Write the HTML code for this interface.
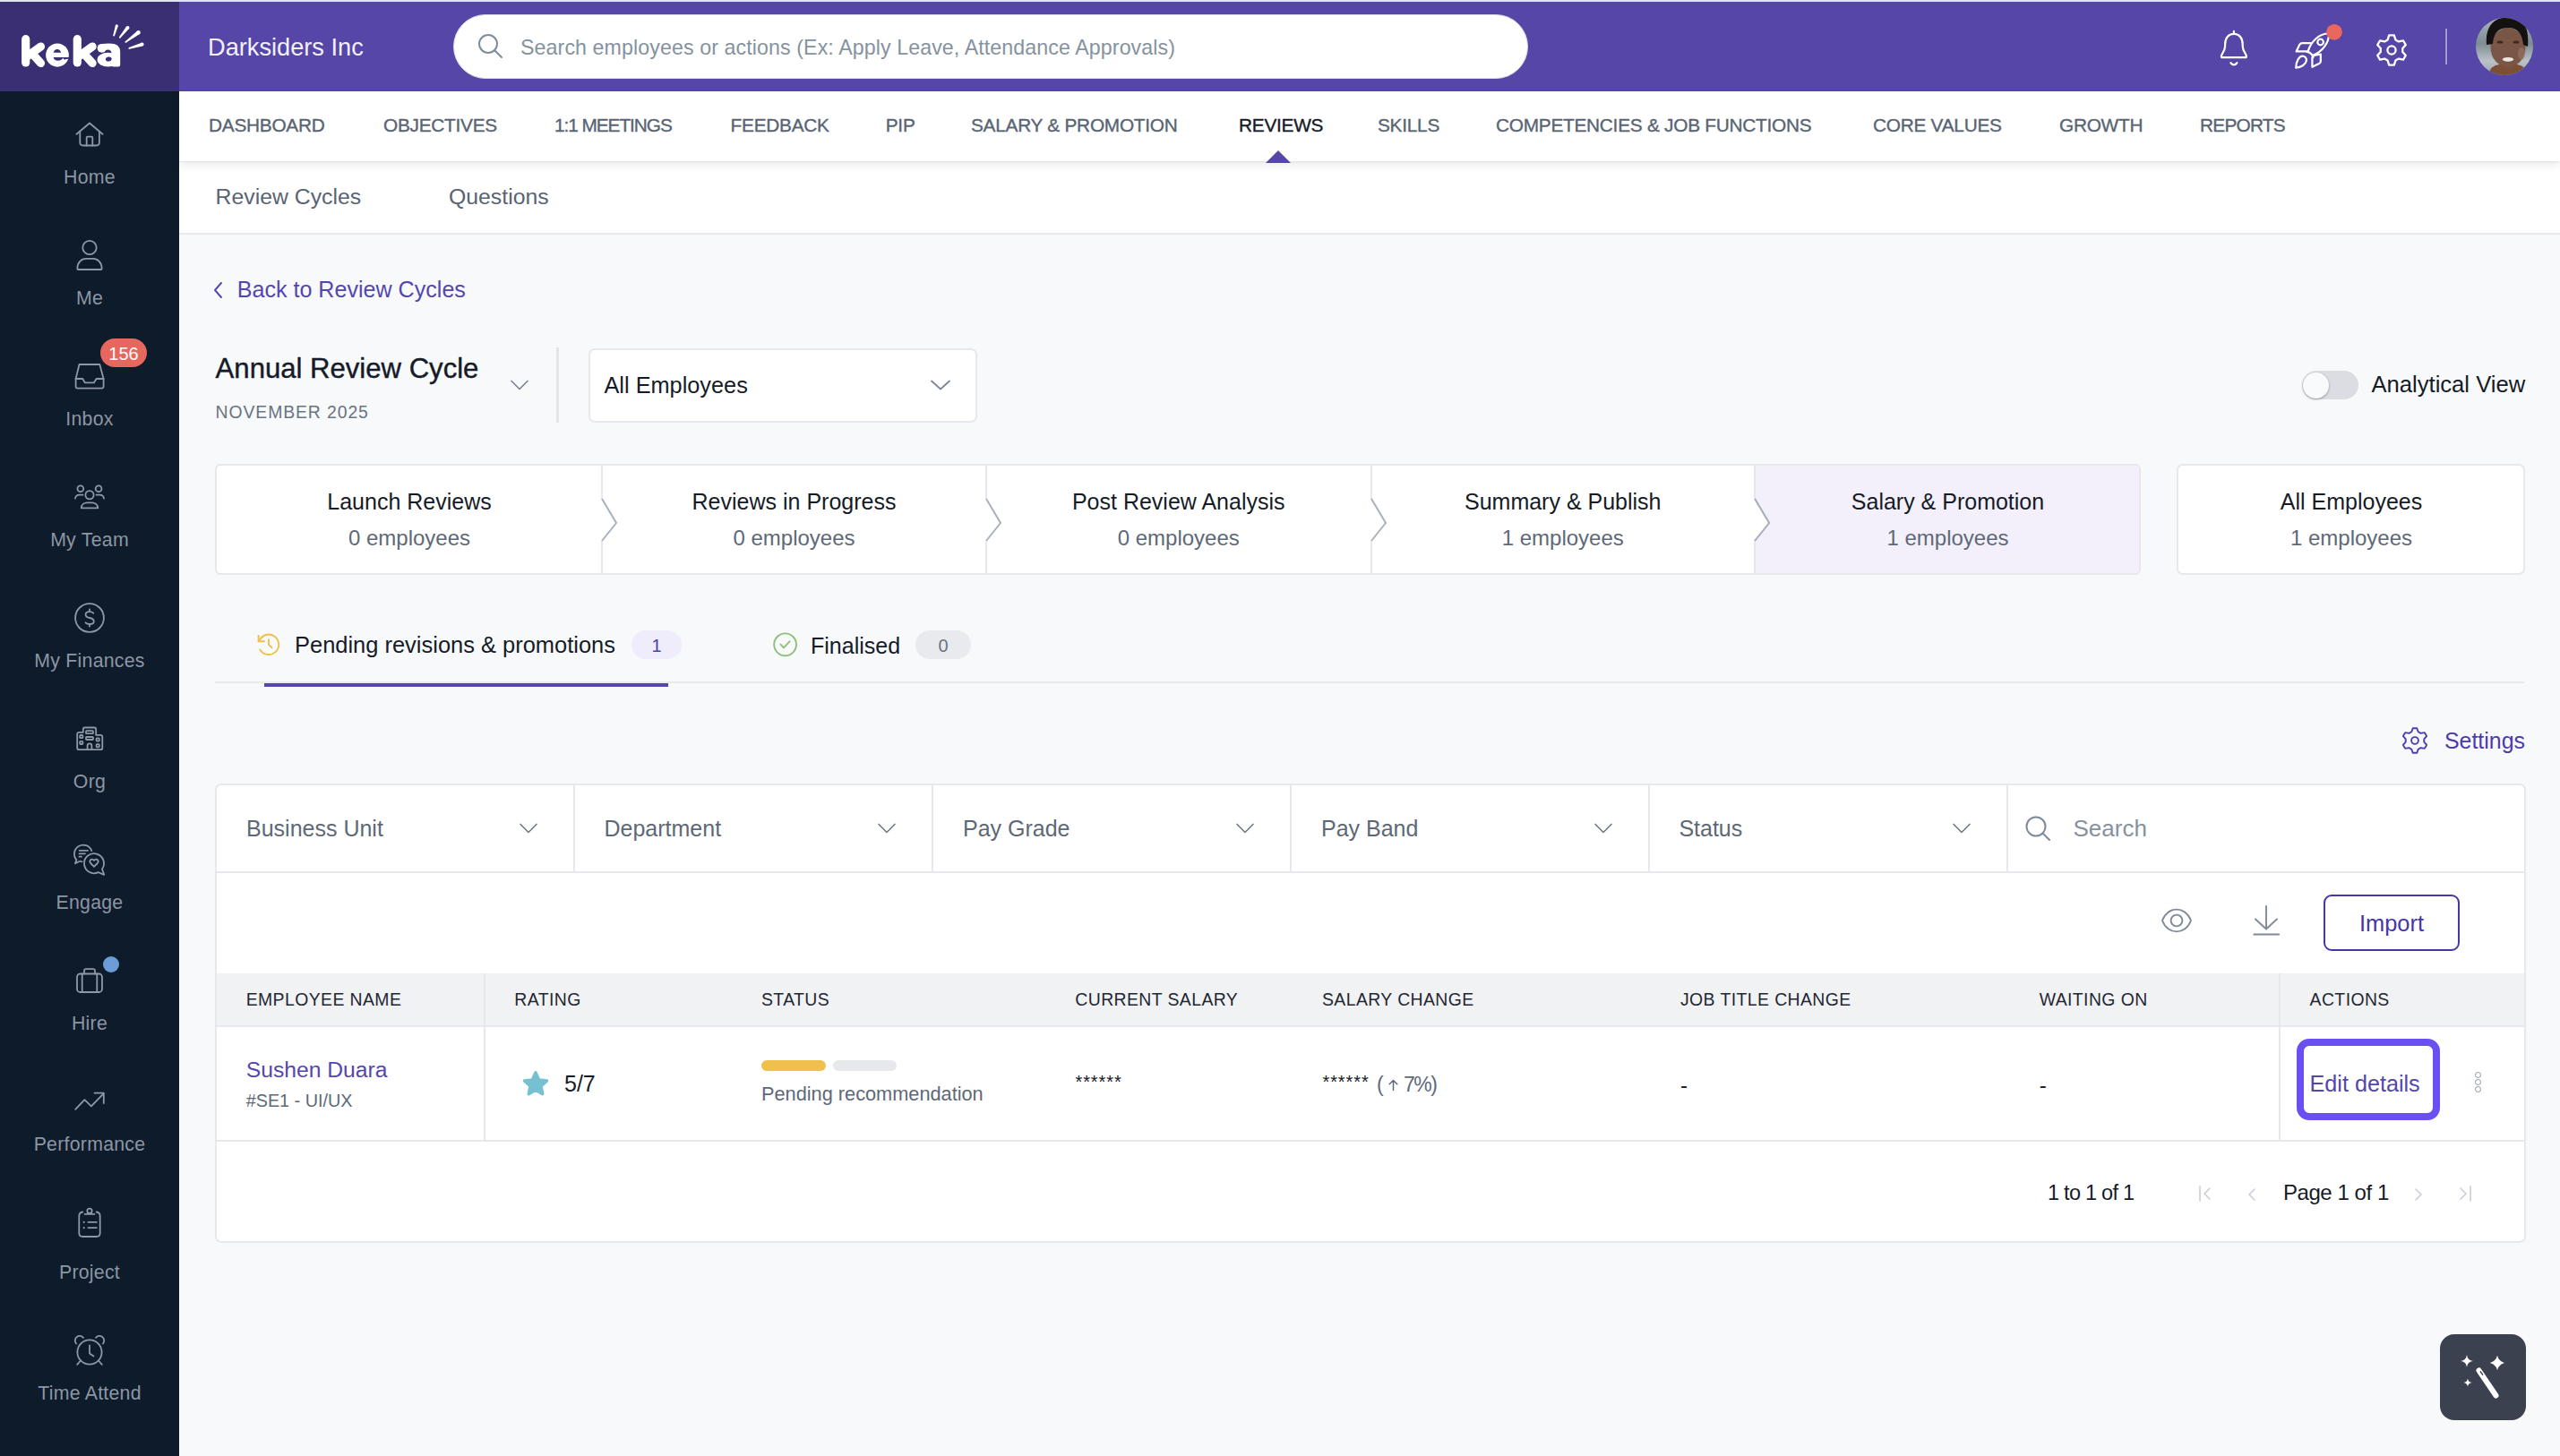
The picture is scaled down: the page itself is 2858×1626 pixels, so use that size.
<!DOCTYPE html>
<html><head><meta charset="utf-8"><title>Keka - Reviews</title>
<style>
html,body{margin:0;padding:0;}
body{width:2858px;height:1626px;overflow:hidden;position:relative;background:#f8f9fb;font-family:"Liberation Sans",sans-serif;}
.t{position:absolute;z-index:5;line-height:1;white-space:nowrap;}
svg{display:block;z-index:5;}
</style></head><body>
<div style="position:absolute;left:0.00px;top:0.00px;width:2858.00px;height:2.00px;background:#dfe6ea;"></div>
<div style="position:absolute;left:200.00px;top:2.00px;width:2658.00px;height:100.00px;background:#5546a8;"></div>
<div style="position:absolute;left:0.00px;top:2.00px;width:200.00px;height:100.00px;background:#3b2f73;"></div>
<div style="position:absolute;left:0.00px;top:102.00px;width:200.00px;height:1524.00px;background:#0e1b2b;"></div>
<div style="position:absolute;left:200.00px;top:102.00px;width:2658.00px;height:78.00px;background:#fff;box-shadow:0 1px 2px rgba(20,30,50,0.07), 0 4px 10px rgba(20,30,50,0.09);z-index:2;"></div>
<div style="position:absolute;left:200.00px;top:180.00px;width:2658.00px;height:82.00px;background:#fff;border-bottom:2px solid #e8e9ec;box-sizing:border-box;"></div>
<svg style="position:absolute;left:0.00px;top:0.00px;" width="200" height="100" viewBox="0 0 200 100" fill="none"><path d="M28.7 43.7 V70" stroke="#fff" stroke-width="9.2" stroke-linecap="round" stroke-linejoin="round" fill="none"/><path d="M31.0 62.5 L45.5 52" stroke="#fff" stroke-width="9.2" stroke-linecap="round" stroke-linejoin="round" fill="none"/><path d="M37.0 61 L45.5 70.5" stroke="#fff" stroke-width="9.2" stroke-linecap="round" stroke-linejoin="round" fill="none"/><path d="M86.3 43.7 V70" stroke="#fff" stroke-width="9.2" stroke-linecap="round" stroke-linejoin="round" fill="none"/><path d="M88.6 62.5 L103.1 52" stroke="#fff" stroke-width="9.2" stroke-linecap="round" stroke-linejoin="round" fill="none"/><path d="M94.6 61 L103.1 70.5" stroke="#fff" stroke-width="9.2" stroke-linecap="round" stroke-linejoin="round" fill="none"/><ellipse cx="64" cy="61.6" rx="12.85" ry="13.05" fill="#fff"/><path d="M59.6 58.8 Q60.5 55 63.9 55 Q67.3 55 68.2 58.8 Z" fill="#3b2f73"/><path d="M59.6 64 H70.8 Q69 67.8 64.6 67.8 Q60.6 67.8 59.6 64 Z" fill="#3b2f73"/><path d="M69.5 64 H77.5 V65.9 Q75 65.3 72 66.8 Z" fill="#3b2f73"/><path d="M113.5 49 Q118 48.6 122 48.6 Q134.2 48.6 134.2 58 V72.6 Q134.2 74.6 132.2 74.6 H126.5 Q124.5 74.6 124.5 72.6 V60 Q124.5 55.4 120.5 55.4 Q117.5 55.4 116 58.6 L112 57 Z" fill="#fff"/><circle cx="113.6" cy="53.8" r="4.9" fill="#fff"/><ellipse cx="120.6" cy="66.7" rx="12" ry="7.9" fill="#fff"/><ellipse cx="121.3" cy="66" rx="3.4" ry="2.5" transform="rotate(-12 121.3 66)" fill="#3b2f73"/><path d="M128.06 39.75 L131.74 29.22 L128.86 28.38 L126.34 39.25 Z" fill="#fff"/><circle cx="130.30" cy="28.80" r="1.50" fill="#fff"/><circle cx="127.20" cy="39.50" r="0.9" fill="#fff"/><path d="M134.50 42.36 L144.08 31.99 L141.12 29.61 L133.10 41.24 Z" fill="#fff"/><circle cx="142.60" cy="30.80" r="1.90" fill="#fff"/><circle cx="133.80" cy="41.80" r="0.9" fill="#fff"/><path d="M140.94 47.62 L155.92 37.96 L153.28 34.44 L139.86 46.18 Z" fill="#fff"/><circle cx="154.60" cy="36.20" r="2.20" fill="#fff"/><circle cx="140.40" cy="46.90" r="0.9" fill="#fff"/><path d="M144.56 54.76 L159.18 51.52 L158.02 47.68 L144.04 53.04 Z" fill="#fff"/><circle cx="158.60" cy="49.60" r="2.00" fill="#fff"/><circle cx="144.30" cy="53.90" r="0.9" fill="#fff"/></svg>
<div class="t " style="top:38.77px;font-size:27.20px;color:#f2f1f9;left:232.00px;">Darksiders Inc</div>
<div style="position:absolute;left:506.00px;top:16.00px;width:1200.00px;height:72.00px;background:#fff;border:1.5px solid #d9dbe6;border-radius:36px;box-sizing:border-box;"></div>
<svg style="position:absolute;left:533.00px;top:37.00px;" width="30" height="30" viewBox="0 0 30 30" fill="none"><circle cx="12" cy="12" r="10" stroke="#7d8b9b" stroke-width="2"/><line x1="19.5" y1="19.5" x2="27" y2="27" stroke="#7d8b9b" stroke-width="2" stroke-linecap="round"/></svg>
<div class="t " style="top:41.76px;font-size:23.20px;color:#8592a0;letter-spacing:0.100px;left:581.00px;">Search employees or actions (Ex: Apply Leave, Attendance Approvals)</div>
<svg style="position:absolute;left:2466.00px;top:24.00px;" width="56" height="56" viewBox="0 0 56 56" fill="none"><path d="M27.9 13.9 C21.6 13.9 18.1 18.9 18.1 25.4 V27.4 C18.1 31 16.9 33.2 15 36 Q13.2 38.8 14.4 40.2 H41.4 Q42.6 38.8 40.8 36 C38.9 33.2 37.7 31 37.7 27.4 V25.4 C37.7 18.9 34.2 13.9 27.9 13.9 Z" stroke="#fff" stroke-width="2.2" stroke-linejoin="round"/><path d="M27.9 10.9 V13.6" stroke="#fff" stroke-width="2.2" stroke-linecap="round"/><path d="M24.4 46.2 Q27.9 50.6 31.4 46.2" stroke="#fff" stroke-width="2.2" stroke-linecap="round"/></svg>
<svg style="position:absolute;left:2550.00px;top:24.00px;" width="72" height="56" viewBox="0 0 72 56" fill="none"><path d="M26.8 32.8 C30 22.5 39 13.3 50 13.5 C50.5 24 42 33.8 32.6 37.6" stroke="#fff" stroke-width="2.2" stroke-linejoin="round" stroke-linecap="round"/><path d="M25 33.6 Q30.5 34.5 32.6 40" stroke="#fff" stroke-width="2.2" stroke-linejoin="round" stroke-linecap="round"/><circle cx="40.6" cy="23" r="3.3" stroke="#fff" stroke-width="2.2" stroke-linejoin="round" stroke-linecap="round"/><path d="M29.6 24.2 H20.3 Q18.3 24.2 17.3 25.8 L13.6 33.4 H25" stroke="#fff" stroke-width="2.2" stroke-linejoin="round" stroke-linecap="round"/><path d="M32.3 38.2 L40.8 36.5 V44.5 Q40.8 46 39.5 46.8 L31.4 50.8 V40" stroke="#fff" stroke-width="2.2" stroke-linejoin="round" stroke-linecap="round"/><path d="M13.2 51.6 C13.2 44.2 17 38.6 20.4 38.6 C23.4 38.6 25.4 41 24.8 44 C24 48 19 51.4 13.2 51.6 Z" stroke="#fff" stroke-width="2.2" stroke-linejoin="round" stroke-linecap="round"/><circle cx="56" cy="11.8" r="8.9" fill="#e8675e"/></svg>
<svg style="position:absolute;left:2646.00px;top:32.00px;" width="48" height="48" viewBox="0 0 48 48" fill="none"><path d="M19.60 12.41 L21.20 7.43 L26.80 7.43 L28.40 12.41 L31.84 14.39 L36.95 13.29 L39.75 18.14 L36.24 22.01 L36.24 25.99 L39.75 29.86 L36.95 34.71 L31.84 33.61 L28.40 35.59 L26.80 40.57 L21.20 40.57 L19.60 35.59 L16.16 33.61 L11.05 34.71 L8.25 29.86 L11.76 25.99 L11.76 22.01 L8.25 18.14 L11.05 13.29 L16.16 14.39 Z" stroke="#fff" stroke-width="2.3" stroke-linejoin="round"/><circle cx="24" cy="24" r="4.6" stroke="#fff" stroke-width="2.3"/></svg>
<div style="position:absolute;left:2730.00px;top:32.00px;width:2.00px;height:40.00px;background:rgba(255,255,255,0.45);"></div>
<svg style="position:absolute;left:2764.00px;top:20.00px;" width="64" height="64" viewBox="0 0 64 64" fill="none"><defs><clipPath id="av"><circle cx="32" cy="32" r="32"/></clipPath><linearGradient id="bgav" x1="0" y1="0" x2="0" y2="1"><stop offset="0" stop-color="#aab4ba"/><stop offset="0.45" stop-color="#7e8c93"/><stop offset="0.75" stop-color="#b9c3c9"/><stop offset="1" stop-color="#9aa5ab"/></linearGradient></defs><g clip-path="url(#av)"><rect width="64" height="64" fill="url(#bgav)"/><path d="M14 64 Q16 53 26 52 H46 Q56 53 58 64 Z" fill="#7a4f35"/><ellipse cx="36" cy="33" rx="19.5" ry="22" fill="#7a5646"/><path d="M12 30 C10 8 22 -1 36 -1 C52 -1 60 8 58 32 L53 30 C52 18 47 11 36 11 C26 11 20 16 19 29 Z" fill="#141210"/><ellipse cx="27" cy="27" rx="3.5" ry="1.6" fill="#3a2a22"/><ellipse cx="45" cy="27" rx="3.5" ry="1.6" fill="#3a2a22"/><ellipse cx="36" cy="46.3" rx="6" ry="2.4" fill="#efe6df"/><ellipse cx="51" cy="40" rx="4" ry="7" fill="#9a7766" opacity="0.6"/></g></svg>
<div class="t " style="top:129.69px;font-size:20.80px;color:#586473;letter-spacing:-0.250px;left:233.00px;-webkit-text-stroke:0.35px #586473;">DASHBOARD</div>
<div class="t " style="top:129.69px;font-size:20.80px;color:#586473;letter-spacing:-0.250px;left:428.00px;-webkit-text-stroke:0.35px #586473;">OBJECTIVES</div>
<div class="t " style="top:129.69px;font-size:20.80px;color:#586473;letter-spacing:-1.050px;left:619.00px;-webkit-text-stroke:0.35px #586473;">1:1 MEETINGS</div>
<div class="t " style="top:129.69px;font-size:20.80px;color:#586473;letter-spacing:-0.250px;left:815.60px;-webkit-text-stroke:0.35px #586473;">FEEDBACK</div>
<div class="t " style="top:129.69px;font-size:20.80px;color:#586473;letter-spacing:-0.250px;left:988.75px;-webkit-text-stroke:0.35px #586473;">PIP</div>
<div class="t " style="top:129.69px;font-size:20.80px;color:#586473;letter-spacing:-0.250px;left:1084.00px;-webkit-text-stroke:0.35px #586473;">SALARY &amp; PROMOTION</div>
<div class="t " style="top:129.69px;font-size:20.80px;color:#586473;letter-spacing:-0.250px;left:1538.00px;-webkit-text-stroke:0.35px #586473;">SKILLS</div>
<div class="t " style="top:129.69px;font-size:20.80px;color:#586473;letter-spacing:-0.250px;left:1670.00px;-webkit-text-stroke:0.35px #586473;">COMPETENCIES &amp; JOB FUNCTIONS</div>
<div class="t " style="top:129.69px;font-size:20.80px;color:#586473;letter-spacing:-0.250px;left:2091.00px;-webkit-text-stroke:0.35px #586473;">CORE VALUES</div>
<div class="t " style="top:129.69px;font-size:20.80px;color:#586473;letter-spacing:-0.250px;left:2299.00px;-webkit-text-stroke:0.35px #586473;">GROWTH</div>
<div class="t " style="top:129.69px;font-size:20.80px;color:#586473;letter-spacing:-0.750px;left:2456.00px;-webkit-text-stroke:0.35px #586473;">REPORTS</div>
<div class="t " style="top:129.69px;font-size:20.80px;color:#141a26;letter-spacing:-0.250px;left:1383.00px;-webkit-text-stroke:0.35px #141a26;">REVIEWS</div>
<svg style="position:absolute;left:1413.00px;top:168.00px;z-index:3;" width="28" height="14" viewBox="0 0 28 14" fill="none"><path d="M0 14 L14 0 L28 14 Z" fill="#5546a8"/></svg>
<div class="t " style="top:208.00px;font-size:24.80px;color:#586473;left:240.60px;">Review Cycles</div>
<div class="t " style="top:208.00px;font-size:24.80px;color:#586473;left:501.00px;">Questions</div>
<div class="t " style="top:187.97px;font-size:21.30px;color:#8c96a3;letter-spacing:0.250px;left:-400.00px;width:1000px;text-align:center;">Home</div>
<div class="t " style="top:322.97px;font-size:21.30px;color:#8c96a3;letter-spacing:0.250px;left:-400.00px;width:1000px;text-align:center;">Me</div>
<div class="t " style="top:457.97px;font-size:21.30px;color:#8c96a3;letter-spacing:0.250px;left:-400.00px;width:1000px;text-align:center;">Inbox</div>
<div class="t " style="top:592.97px;font-size:21.30px;color:#8c96a3;letter-spacing:0.250px;left:-400.00px;width:1000px;text-align:center;">My Team</div>
<div class="t " style="top:727.97px;font-size:21.30px;color:#8c96a3;letter-spacing:0.250px;left:-400.00px;width:1000px;text-align:center;">My Finances</div>
<div class="t " style="top:862.97px;font-size:21.30px;color:#8c96a3;letter-spacing:0.250px;left:-400.00px;width:1000px;text-align:center;">Org</div>
<div class="t " style="top:997.97px;font-size:21.30px;color:#8c96a3;letter-spacing:0.250px;left:-400.00px;width:1000px;text-align:center;">Engage</div>
<div class="t " style="top:1132.97px;font-size:21.30px;color:#8c96a3;letter-spacing:0.250px;left:-400.00px;width:1000px;text-align:center;">Hire</div>
<div class="t " style="top:1267.97px;font-size:21.30px;color:#8c96a3;letter-spacing:0.250px;left:-400.00px;width:1000px;text-align:center;">Performance</div>
<div class="t " style="top:1410.97px;font-size:21.30px;color:#8c96a3;letter-spacing:0.250px;left:-400.00px;width:1000px;text-align:center;">Project</div>
<div class="t " style="top:1546.47px;font-size:21.30px;color:#8c96a3;letter-spacing:0.250px;left:-400.00px;width:1000px;text-align:center;">Time Attend</div>
<svg style="position:absolute;left:76.00px;top:126.00px;" width="48" height="48" viewBox="0 0 48 48" fill="none"><path d="M9.5 23.8 L24 11.5 L38.5 23.8" stroke="#8e98a6" stroke-width="1.8" stroke-linecap="round" stroke-linejoin="round"/><path d="M13.3 21.5 V33 Q13.3 36.5 16.8 36.5 H31.4 Q34.9 36.5 34.9 33 V21.5" stroke="#8e98a6" stroke-width="1.8" stroke-linecap="round" stroke-linejoin="round"/><path d="M20.7 36.5 V27.6 Q20.7 26.6 21.7 26.6 H26.3 Q27.3 26.6 27.3 27.6 V36.5" stroke="#8e98a6" stroke-width="1.8" stroke-linecap="round" stroke-linejoin="round"/></svg>
<svg style="position:absolute;left:76.00px;top:260.00px;" width="48" height="48" viewBox="0 0 48 48" fill="none"><circle cx="24" cy="16.5" r="7.7" stroke="#8e98a6" stroke-width="1.8" stroke-linecap="round" stroke-linejoin="round"/><path d="M10.3 40 C10.3 33 15 28.9 20 28.9 H28 C33 28.9 37.7 33 37.7 40 Q37.7 41 36.7 41 H11.3 Q10.3 41 10.3 40 Z" stroke="#8e98a6" stroke-width="1.8" stroke-linecap="round" stroke-linejoin="round"/></svg>
<svg style="position:absolute;left:76.00px;top:400.00px;" width="48" height="48" viewBox="0 0 48 48" fill="none"><path d="M12.5 7 H35.3 L39.6 23 V31.5 Q39.6 33.6 37.5 33.6 H10.7 Q8.6 33.6 8.6 31.5 V23 Z" stroke="#8e98a6" stroke-width="1.8" stroke-linecap="round" stroke-linejoin="round"/><path d="M8.6 23 H16.3 L18.8 27.4 H28.8 L31.6 23 H39.6" stroke="#8e98a6" stroke-width="1.8" stroke-linecap="round" stroke-linejoin="round"/></svg>
<div style="position:absolute;left:112.00px;top:378.00px;width:52.00px;height:32.00px;background:#e5675d;border-radius:16px;"></div>
<div class="t " style="top:385.07px;font-size:20.00px;color:#fff;left:-362.00px;width:1000px;text-align:center;">156</div>
<svg style="position:absolute;left:76.00px;top:530.00px;" width="48" height="48" viewBox="0 0 48 48" fill="none"><circle cx="13.85" cy="15.8" r="3.4" stroke="#8e98a6" stroke-width="1.8" stroke-linecap="round" stroke-linejoin="round"/><circle cx="34.1" cy="15.8" r="3.4" stroke="#8e98a6" stroke-width="1.8" stroke-linecap="round" stroke-linejoin="round"/><circle cx="24" cy="22.75" r="4.6" stroke="#8e98a6" stroke-width="1.8" stroke-linecap="round" stroke-linejoin="round"/><path d="M8 26.7 Q8.5 22.7 13 22.7 H16.5" stroke="#8e98a6" stroke-width="1.8" stroke-linecap="round" stroke-linejoin="round"/><path d="M40 26.7 Q39.5 22.7 35 22.7 H31.5" stroke="#8e98a6" stroke-width="1.8" stroke-linecap="round" stroke-linejoin="round"/><path d="M14.8 37.4 C14.8 33.5 18 31.3 21.5 31.3 H26.5 C30 31.3 33.3 33.5 33.3 37.4 Z" stroke="#8e98a6" stroke-width="1.8" stroke-linecap="round" stroke-linejoin="round"/></svg>
<svg style="position:absolute;left:76.00px;top:666.00px;" width="48" height="48" viewBox="0 0 48 48" fill="none"><circle cx="24" cy="24" r="15.9" stroke="#8e98a6" stroke-width="1.8" stroke-linecap="round" stroke-linejoin="round"/><path d="M28.3 18.7 Q26.5 17.2 24 17.2 Q19.6 17.2 19.6 20.5 Q19.6 23 24 24 Q28.8 25 28.8 28 Q28.8 31 24 31 Q21 31 19.5 29.3" stroke="#8e98a6" stroke-width="1.8" stroke-linecap="round" stroke-linejoin="round"/><line x1="24" y1="14.3" x2="24" y2="17.2" stroke="#8e98a6" stroke-width="1.8" stroke-linecap="round" stroke-linejoin="round"/><line x1="24" y1="31" x2="24" y2="33.6" stroke="#8e98a6" stroke-width="1.8" stroke-linecap="round" stroke-linejoin="round"/></svg>
<svg style="position:absolute;left:76.00px;top:800.00px;" width="48" height="48" viewBox="0 0 48 48" fill="none"><path d="M12.2 37.2 Q10.2 37.2 10.2 35.2 V19.8 Q10.2 17.8 12.2 17.8 H16.8 V14.5 Q16.8 12.5 18.8 12.5 H29.2 Q31.2 12.5 31.2 14.5 V20.8 H36.3 Q38.3 20.8 38.3 22.8 V35.2 Q38.3 37.2 36.3 37.2 Z" stroke="#8e98a6" stroke-width="1.8" stroke-linecap="round" stroke-linejoin="round"/><rect x="13.2" y="21" width="3.2" height="3.2" rx="0.8" stroke="#8e98a6" stroke-width="1.8" stroke-linecap="round" stroke-linejoin="round"/><rect x="13.2" y="27.8" width="3.2" height="3.2" rx="0.8" stroke="#8e98a6" stroke-width="1.8" stroke-linecap="round" stroke-linejoin="round"/><rect x="20" y="16.2" width="8" height="3" rx="0.8" stroke="#8e98a6" stroke-width="1.8" stroke-linecap="round" stroke-linejoin="round"/><rect x="20" y="23" width="8" height="3" rx="0.8" stroke="#8e98a6" stroke-width="1.8" stroke-linecap="round" stroke-linejoin="round"/><rect x="31.6" y="24.4" width="3.2" height="3.2" rx="0.8" stroke="#8e98a6" stroke-width="1.8" stroke-linecap="round" stroke-linejoin="round"/><rect x="31.6" y="31.1" width="3.2" height="3.2" rx="0.8" stroke="#8e98a6" stroke-width="1.8" stroke-linecap="round" stroke-linejoin="round"/><path d="M21.6 37.2 V32.7 Q21.6 30.3 24 30.3 Q26.4 30.3 26.4 32.7 V37.2" stroke="#8e98a6" stroke-width="1.8" stroke-linecap="round" stroke-linejoin="round"/></svg>
<svg style="position:absolute;left:76.00px;top:936.00px;" width="48" height="48" viewBox="0 0 48 48" fill="none"><path d="M26.3 14.1 A10 10 0 1 0 9.4 24.2 L8 28.3 L12.5 26 Q14 25.6 15.5 26.3" stroke="#8e98a6" stroke-width="1.8" stroke-linecap="round" stroke-linejoin="round"/><path d="M12.7 13.9 H22" stroke="#8e98a6" stroke-width="1.8" stroke-linecap="round" stroke-linejoin="round"/><path d="M12.5 17.3 H19" stroke="#8e98a6" stroke-width="1.8" stroke-linecap="round" stroke-linejoin="round"/><path d="M12.5 20.7 H15" stroke="#8e98a6" stroke-width="1.8" stroke-linecap="round" stroke-linejoin="round"/><path d="M33.65 38.17 A11 11 0 1 1 38 34.5 L40.2 40.8 Z" stroke="#8e98a6" stroke-width="1.8" stroke-linecap="round" stroke-linejoin="round"/><path d="M29 31.8 L25.2 28 Q23.5 26 25 24.3 Q27 22.6 29 25 Q31 22.6 33 24.3 Q34.5 26 32.8 28 Z" stroke="#8e98a6" stroke-width="1.8" stroke-linecap="round" stroke-linejoin="round"/></svg>
<svg style="position:absolute;left:76.00px;top:1066.00px;" width="48" height="48" viewBox="0 0 48 48" fill="none"><rect x="10" y="21.5" width="28" height="20.5" rx="3.5" stroke="#8e98a6" stroke-width="1.8" stroke-linecap="round" stroke-linejoin="round"/><path d="M18 21.5 V18.2 Q18 16.2 20 16.2 H28 Q30 16.2 30 18.2 V21.5" stroke="#8e98a6" stroke-width="1.8" stroke-linecap="round" stroke-linejoin="round"/><line x1="15.7" y1="21.5" x2="15.7" y2="42" stroke="#8e98a6" stroke-width="1.8" stroke-linecap="round" stroke-linejoin="round"/><line x1="32.3" y1="21.5" x2="32.3" y2="42" stroke="#8e98a6" stroke-width="1.8" stroke-linecap="round" stroke-linejoin="round"/></svg>
<div style="position:absolute;left:115.00px;top:1068.00px;width:18.00px;height:18.00px;background:#6b9ed6;border-radius:50%;"></div>
<svg style="position:absolute;left:76.00px;top:1212.00px;" width="48" height="48" viewBox="0 0 48 48" fill="none"><path d="M8.2 26.8 L18.4 16.2 L25.9 23.4 L39.5 9.4" stroke="#8e98a6" stroke-width="1.8" stroke-linecap="round" stroke-linejoin="round"/><path d="M29.5 8.6 H39.8 V20" stroke="#8e98a6" stroke-width="1.8" stroke-linecap="round" stroke-linejoin="round"/></svg>
<svg style="position:absolute;left:76.00px;top:1340.00px;" width="48" height="48" viewBox="0 0 48 48" fill="none"><path d="M16.2 13.5 Q12.3 14 12.3 18 V37 Q12.3 41 16.3 41 H31.7 Q35.7 41 35.7 37 V18 Q35.7 14 31.7 13.5" stroke="#8e98a6" stroke-width="1.8" stroke-linecap="round" stroke-linejoin="round"/><path d="M18.5 15.8 H29.5" stroke="#8e98a6" stroke-width="1.8" stroke-linecap="round" stroke-linejoin="round"/><circle cx="24" cy="12.3" r="2.7" stroke="#8e98a6" stroke-width="1.8" stroke-linecap="round" stroke-linejoin="round"/><circle cx="17.7" cy="24.9" r="1.1" fill="#8e98a6" stroke="none"/><circle cx="17.7" cy="31.2" r="1.1" fill="#8e98a6" stroke="none"/><path d="M22.5 24.9 H31.8" stroke="#8e98a6" stroke-width="1.8" stroke-linecap="round" stroke-linejoin="round"/><path d="M22.5 31.2 H31.8" stroke="#8e98a6" stroke-width="1.8" stroke-linecap="round" stroke-linejoin="round"/></svg>
<svg style="position:absolute;left:76.00px;top:1484.00px;" width="48" height="48" viewBox="0 0 48 48" fill="none"><circle cx="24" cy="26" r="13.6" stroke="#8e98a6" stroke-width="1.8" stroke-linecap="round" stroke-linejoin="round"/><path d="M24 18.5 V27.5 L28.5 30.6" stroke="#8e98a6" stroke-width="1.8" stroke-linecap="round" stroke-linejoin="round"/><path d="M9 16.5 A4.6 4.6 0 0 1 17 9.8" stroke="#8e98a6" stroke-width="1.8" stroke-linecap="round" stroke-linejoin="round"/><path d="M39 16.5 A4.6 4.6 0 0 0 31 9.8" stroke="#8e98a6" stroke-width="1.8" stroke-linecap="round" stroke-linejoin="round"/><path d="M13.5 36 L10.2 39.8" stroke="#8e98a6" stroke-width="1.8" stroke-linecap="round" stroke-linejoin="round"/><path d="M34.5 36 L37.8 39.8" stroke="#8e98a6" stroke-width="1.8" stroke-linecap="round" stroke-linejoin="round"/></svg>
<svg style="position:absolute;left:236.00px;top:313.00px;" width="16" height="22" viewBox="0 0 16 22" fill="none"><path d="M11 3 L4 11 L11 19" stroke="#5446b0" stroke-width="1.9" stroke-linecap="round" stroke-linejoin="round"/></svg>
<div class="t " style="top:310.75px;font-size:25.10px;color:#5446b0;left:264.70px;">Back to Review Cycles</div>
<div class="t " style="top:395.67px;font-size:31.10px;color:#151b27;left:240.60px;-webkit-text-stroke:0.4px #151b27;">Annual Review Cycle</div>
<div class="t " style="top:451.17px;font-size:19.40px;color:#6a7482;letter-spacing:0.900px;left:240.60px;">NOVEMBER 2025</div>
<svg style="position:absolute;left:568.00px;top:422.00px;" width="24" height="16" viewBox="0 0 24 16" fill="none"><path d="M3 3.5 L12 12.5 L21 3.5" stroke="#7b8593" stroke-width="1.7" stroke-linecap="round" stroke-linejoin="round"/></svg>
<div style="position:absolute;left:621.00px;top:388.00px;width:3.00px;height:84.00px;background:#e3e5e9;"></div>
<div style="position:absolute;left:657.00px;top:388.50px;width:434.00px;height:83.00px;background:#fff;border:2px solid #e6e8ec;border-radius:7px;box-sizing:border-box;"></div>
<div class="t " style="top:417.58px;font-size:25.30px;color:#151b27;left:674.50px;">All Employees</div>
<svg style="position:absolute;left:1037.00px;top:422.00px;" width="26" height="16" viewBox="0 0 26 16" fill="none"><path d="M3 3.5 L13 12.5 L23 3.5" stroke="#7b8593" stroke-width="1.7" stroke-linecap="round" stroke-linejoin="round"/></svg>
<div style="position:absolute;left:2570.00px;top:414.00px;width:63.00px;height:32.00px;background:#dcdde3;border-radius:16px;"></div>
<div style="position:absolute;left:2570.50px;top:415.50px;width:29.00px;height:29.00px;background:#f9fafb;border-radius:50%;box-shadow:0 1px 2.5px rgba(0,0,0,0.35);"></div>
<div class="t " style="top:417.32px;font-size:25.60px;color:#151b27;left:2647.50px;">Analytical View</div>
<div style="position:absolute;left:240.00px;top:518.00px;width:2150.00px;height:124.00px;background:#fff;border:2px solid #e6e8ec;border-radius:6px;box-sizing:border-box;"></div>
<div style="position:absolute;left:1958.00px;top:520.00px;width:430.00px;height:120.00px;background:#f3f0fc;border-radius:0 4px 4px 0;"></div>
<div style="position:absolute;left:671.00px;top:520.00px;width:2.00px;height:37.00px;background:#e6e8ec;"></div>
<div style="position:absolute;left:671.00px;top:604.00px;width:2.00px;height:36.00px;background:#e6e8ec;"></div>
<div style="position:absolute;left:1100.00px;top:520.00px;width:2.00px;height:37.00px;background:#e6e8ec;"></div>
<div style="position:absolute;left:1100.00px;top:604.00px;width:2.00px;height:36.00px;background:#e6e8ec;"></div>
<div style="position:absolute;left:1529.50px;top:520.00px;width:2.00px;height:37.00px;background:#e6e8ec;"></div>
<div style="position:absolute;left:1529.50px;top:604.00px;width:2.00px;height:36.00px;background:#e6e8ec;"></div>
<div style="position:absolute;left:1958.00px;top:520.00px;width:2.00px;height:37.00px;background:#e6e8ec;"></div>
<div style="position:absolute;left:1958.00px;top:604.00px;width:2.00px;height:36.00px;background:#e6e8ec;"></div>
<svg style="position:absolute;left:670.00px;top:554.00px;" width="22" height="54" viewBox="0 0 22 54" fill="none"><path d="M2 3 L18 30 L2 50" stroke="#a9b1bc" stroke-width="2" stroke-linejoin="miter"/><path d="M0 0 L0 0" /></svg>
<svg style="position:absolute;left:1099.00px;top:554.00px;" width="22" height="54" viewBox="0 0 22 54" fill="none"><path d="M2 3 L18 30 L2 50" stroke="#a9b1bc" stroke-width="2" stroke-linejoin="miter"/><path d="M0 0 L0 0" /></svg>
<svg style="position:absolute;left:1528.50px;top:554.00px;" width="22" height="54" viewBox="0 0 22 54" fill="none"><path d="M2 3 L18 30 L2 50" stroke="#a9b1bc" stroke-width="2" stroke-linejoin="miter"/><path d="M0 0 L0 0" /></svg>
<svg style="position:absolute;left:1957.00px;top:554.00px;" width="22" height="54" viewBox="0 0 22 54" fill="none"><path d="M2 3 L18 30 L2 50" stroke="#a9b1bc" stroke-width="2" stroke-linejoin="miter"/><path d="M0 0 L0 0" /></svg>
<svg style="position:absolute;left:1958.00px;top:556.00px;" width="18" height="50" viewBox="0 0 18 50" fill="none"><path d="M0 0 L17 28 L0 48 Z" fill="#fff"/></svg>
<svg style="position:absolute;left:1957.00px;top:554.00px;" width="22" height="54" viewBox="0 0 22 54" fill="none"><path d="M2 3 L18 30 L2 50" stroke="#a9b1bc" stroke-width="2"/></svg>
<div class="t " style="top:548.23px;font-size:25.00px;color:#151b27;left:-43.00px;width:1000px;text-align:center;">Launch Reviews</div>
<div class="t " style="top:588.68px;font-size:24.00px;color:#5e6978;left:-43.00px;width:1000px;text-align:center;">0 employees</div>
<div class="t " style="top:548.23px;font-size:25.00px;color:#151b27;left:386.50px;width:1000px;text-align:center;">Reviews in Progress</div>
<div class="t " style="top:588.68px;font-size:24.00px;color:#5e6978;left:386.50px;width:1000px;text-align:center;">0 employees</div>
<div class="t " style="top:548.23px;font-size:25.00px;color:#151b27;left:815.75px;width:1000px;text-align:center;">Post Review Analysis</div>
<div class="t " style="top:588.68px;font-size:24.00px;color:#5e6978;left:815.75px;width:1000px;text-align:center;">0 employees</div>
<div class="t " style="top:548.23px;font-size:25.00px;color:#151b27;left:1244.75px;width:1000px;text-align:center;">Summary &amp; Publish</div>
<div class="t " style="top:588.68px;font-size:24.00px;color:#5e6978;left:1244.75px;width:1000px;text-align:center;">1 employees</div>
<div class="t " style="top:548.23px;font-size:25.00px;color:#151b27;left:1674.50px;width:1000px;text-align:center;">Salary &amp; Promotion</div>
<div class="t " style="top:588.68px;font-size:24.00px;color:#5e6978;left:1674.50px;width:1000px;text-align:center;">1 employees</div>
<div style="position:absolute;left:2430.00px;top:518.00px;width:389.00px;height:124.00px;background:#fff;border:2px solid #e6e8ec;border-radius:7px;box-sizing:border-box;"></div>
<div class="t " style="top:548.23px;font-size:25.00px;color:#151b27;left:2125.00px;width:1000px;text-align:center;">All Employees</div>
<div class="t " style="top:588.68px;font-size:24.00px;color:#5e6978;left:2125.00px;width:1000px;text-align:center;">1 employees</div>
<div style="position:absolute;left:240.00px;top:761.00px;width:2578.00px;height:2.00px;background:#e8eaed;"></div>
<div style="position:absolute;left:294.70px;top:762.50px;width:451.00px;height:4.50px;background:#5546a8;"></div>
<svg style="position:absolute;left:280.00px;top:700.00px;" width="40" height="40" viewBox="0 0 40 40" fill="none"><path d="M9.7 15.4 A11.2 11.2 0 1 1 10.3 25.4" stroke="#f0bf4c" stroke-width="1.9" stroke-linecap="round"/><path d="M8.6 9.9 V16.2 H14.8" stroke="#f0bf4c" stroke-width="1.9" stroke-linecap="square" stroke-linejoin="miter"/><path d="M20 14.3 V19.8 L23.5 23.3" stroke="#f0bf4c" stroke-width="1.9" stroke-linecap="round" stroke-linejoin="round"/></svg>
<div class="t " style="top:708.44px;font-size:25.46px;color:#151b27;left:329.00px;">Pending revisions &amp; promotions</div>
<div style="position:absolute;left:705.00px;top:704.00px;width:56.00px;height:32.00px;background:#efecfb;border-radius:16px;"></div>
<div class="t " style="top:711.07px;font-size:20.00px;color:#4b3fb0;left:233.00px;width:1000px;text-align:center;">1</div>
<svg style="position:absolute;left:856.00px;top:700.00px;" width="40" height="40" viewBox="0 0 40 40" fill="none"><circle cx="20.6" cy="19.8" r="12.4" stroke="#8cc17a" stroke-width="1.9"/><path d="M15.5 19.6 L19 23.3 L25.7 16.2" stroke="#8cc17a" stroke-width="1.9" stroke-linecap="round" stroke-linejoin="round"/></svg>
<div class="t " style="top:708.83px;font-size:25.00px;color:#151b27;left:905.00px;">Finalised</div>
<div style="position:absolute;left:1022.00px;top:704.00px;width:62.00px;height:32.00px;background:#e9eaed;border-radius:16px;"></div>
<div class="t " style="top:711.07px;font-size:20.00px;color:#6a7482;left:553.00px;width:1000px;text-align:center;">0</div>
<svg style="position:absolute;left:2675.80px;top:807.00px;" width="40" height="40" viewBox="0 0 40 40" fill="none"><path d="M16.30 10.28 L17.70 6.19 L22.30 6.19 L23.70 10.28 L26.57 11.94 L30.81 11.10 L33.11 15.09 L30.27 18.34 L30.27 21.66 L33.11 24.91 L30.81 28.90 L26.57 28.06 L23.70 29.72 L22.30 33.81 L17.70 33.81 L16.30 29.72 L13.43 28.06 L9.19 28.90 L6.89 24.91 L9.73 21.66 L9.73 18.34 L6.89 15.09 L9.19 11.10 L13.43 11.94 Z" stroke="#4b3eb0" stroke-width="1.9" stroke-linejoin="round"/><circle cx="20" cy="20" r="3.9" stroke="#4b3eb0" stroke-width="1.9"/></svg>
<div class="t " style="top:815.12px;font-size:24.90px;color:#4b3bb0;left:2729.00px;">Settings</div>
<div style="position:absolute;left:240.00px;top:874.50px;width:2580.00px;height:513.00px;background:#fff;border:2px solid #e6e8ec;border-radius:7px;box-sizing:border-box;"></div>
<div style="position:absolute;left:242.00px;top:972.50px;width:2576.00px;height:2.00px;background:#e6e8ec;"></div>
<div style="position:absolute;left:640.00px;top:876.50px;width:2.00px;height:96.00px;background:#e6e8ec;"></div>
<div style="position:absolute;left:1040.00px;top:876.50px;width:2.00px;height:96.00px;background:#e6e8ec;"></div>
<div style="position:absolute;left:1440.00px;top:876.50px;width:2.00px;height:96.00px;background:#e6e8ec;"></div>
<div style="position:absolute;left:1840.00px;top:876.50px;width:2.00px;height:96.00px;background:#e6e8ec;"></div>
<div style="position:absolute;left:2240.00px;top:876.50px;width:2.00px;height:96.00px;background:#e6e8ec;"></div>
<div class="t " style="top:912.83px;font-size:25.00px;color:#5e6978;left:275.00px;">Business Unit</div>
<div class="t " style="top:912.83px;font-size:25.00px;color:#5e6978;left:674.50px;">Department</div>
<div class="t " style="top:912.83px;font-size:25.00px;color:#5e6978;left:1075.00px;">Pay Grade</div>
<div class="t " style="top:912.83px;font-size:25.00px;color:#5e6978;left:1475.00px;">Pay Band</div>
<div class="t " style="top:912.83px;font-size:25.00px;color:#5e6978;left:1874.40px;">Status</div>
<svg style="position:absolute;left:578.00px;top:917.00px;" width="24" height="16" viewBox="0 0 24 16" fill="none"><path d="M3 3.5 L12 12.5 L21 3.5" stroke="#727d8b" stroke-width="1.7" stroke-linecap="round" stroke-linejoin="round"/></svg>
<svg style="position:absolute;left:978.00px;top:917.00px;" width="24" height="16" viewBox="0 0 24 16" fill="none"><path d="M3 3.5 L12 12.5 L21 3.5" stroke="#727d8b" stroke-width="1.7" stroke-linecap="round" stroke-linejoin="round"/></svg>
<svg style="position:absolute;left:1378.00px;top:917.00px;" width="24" height="16" viewBox="0 0 24 16" fill="none"><path d="M3 3.5 L12 12.5 L21 3.5" stroke="#727d8b" stroke-width="1.7" stroke-linecap="round" stroke-linejoin="round"/></svg>
<svg style="position:absolute;left:1778.00px;top:917.00px;" width="24" height="16" viewBox="0 0 24 16" fill="none"><path d="M3 3.5 L12 12.5 L21 3.5" stroke="#727d8b" stroke-width="1.7" stroke-linecap="round" stroke-linejoin="round"/></svg>
<svg style="position:absolute;left:2178.00px;top:917.00px;" width="24" height="16" viewBox="0 0 24 16" fill="none"><path d="M3 3.5 L12 12.5 L21 3.5" stroke="#727d8b" stroke-width="1.7" stroke-linecap="round" stroke-linejoin="round"/></svg>
<svg style="position:absolute;left:2260.00px;top:910.00px;" width="32" height="32" viewBox="0 0 32 32" fill="none"><circle cx="13" cy="13" r="10.5" stroke="#7d8b9b" stroke-width="2"/><line x1="20.5" y1="20.5" x2="28" y2="28" stroke="#7d8b9b" stroke-width="2" stroke-linecap="round"/></svg>
<div class="t " style="top:911.99px;font-size:26.00px;color:#8592a0;left:2314.50px;">Search</div>
<svg style="position:absolute;left:2411.00px;top:1012.00px;" width="38" height="32" viewBox="0 0 38 32" fill="none"><path d="M3 16 C9 -0.5 29 -0.5 35 16 C29 32.5 9 32.5 3 16 Z" stroke="#7d8b9b" stroke-width="1.9" stroke-linejoin="round"/><circle cx="19" cy="16" r="6.4" stroke="#7d8b9b" stroke-width="1.9"/></svg>
<svg style="position:absolute;left:2513.00px;top:1009.00px;" width="34" height="38" viewBox="0 0 34 38" fill="none"><line x1="17" y1="3" x2="17" y2="28" stroke="#7f8a99" stroke-width="1.9" stroke-linecap="round"/><path d="M5 17.5 L17 28.5 L29 17.5" stroke="#7f8a99" stroke-width="1.9" stroke-linecap="round" stroke-linejoin="round"/><line x1="3.5" y1="34.5" x2="31" y2="34.5" stroke="#7f8a99" stroke-width="2.2" stroke-linecap="round"/></svg>
<div style="position:absolute;left:2594.00px;top:999.00px;width:152.00px;height:63.00px;background:#fff;border:2px solid #4537a6;border-radius:9px;box-sizing:border-box;"></div>
<div class="t " style="top:1018.79px;font-size:25.40px;color:#4537a6;left:2170.00px;width:1000px;text-align:center;">Import</div>
<div style="position:absolute;left:242.00px;top:1087.00px;width:2576.00px;height:59.00px;background:#f1f2f4;"></div>
<div style="position:absolute;left:242.00px;top:1145.00px;width:2576.00px;height:2.00px;background:#e6e8ec;"></div>
<div style="position:absolute;left:539.50px;top:1087.00px;width:2.00px;height:187.00px;background:#e6e8ec;"></div>
<div style="position:absolute;left:2544.00px;top:1087.00px;width:2.00px;height:187.00px;background:#e6e8ec;"></div>
<div class="t " style="top:1107.07px;font-size:19.40px;color:#1f2733;letter-spacing:0.420px;left:274.70px;">EMPLOYEE NAME</div>
<div class="t " style="top:1107.07px;font-size:19.40px;color:#1f2733;letter-spacing:0.420px;left:574.30px;">RATING</div>
<div class="t " style="top:1107.07px;font-size:19.40px;color:#1f2733;letter-spacing:0.420px;left:850.00px;">STATUS</div>
<div class="t " style="top:1107.07px;font-size:19.40px;color:#1f2733;letter-spacing:0.420px;left:1200.30px;">CURRENT SALARY</div>
<div class="t " style="top:1107.07px;font-size:19.40px;color:#1f2733;letter-spacing:0.420px;left:1476.00px;">SALARY CHANGE</div>
<div class="t " style="top:1107.07px;font-size:19.40px;color:#1f2733;letter-spacing:0.420px;left:1876.00px;">JOB TITLE CHANGE</div>
<div class="t " style="top:1107.07px;font-size:19.40px;color:#1f2733;letter-spacing:0.420px;left:2276.70px;">WAITING ON</div>
<div class="t " style="top:1107.07px;font-size:19.40px;color:#1f2733;letter-spacing:0.420px;left:2578.60px;">ACTIONS</div>
<div style="position:absolute;left:242.00px;top:1272.50px;width:2576.00px;height:2.00px;background:#e6e8ec;"></div>
<div class="t " style="top:1182.59px;font-size:24.70px;color:#5446b0;left:274.70px;">Sushen Duara</div>
<div class="t " style="top:1219.74px;font-size:19.80px;color:#5e6978;left:274.70px;">#SE1 - UI/UX</div>
<svg style="position:absolute;left:580.00px;top:1192.00px;" width="36" height="36" viewBox="0 0 36 36" fill="none"><path d="M18.00 5.80 L21.70 13.90 L30.55 14.92 L23.99 20.95 L25.76 29.68 L18.00 25.30 L10.24 29.68 L12.01 20.95 L5.45 14.92 L14.30 13.90 Z" fill="#76c1d1" stroke="#76c1d1" stroke-width="3.4" stroke-linejoin="round"/></svg>
<div class="t " style="top:1197.83px;font-size:25.00px;color:#151b27;left:630.00px;">5/7</div>
<div style="position:absolute;left:850.00px;top:1184.00px;width:72.00px;height:12.00px;background:#f0c04f;border-radius:6px;"></div>
<div style="position:absolute;left:930.00px;top:1184.00px;width:71.00px;height:12.00px;background:#e7e8eb;border-radius:6px;"></div>
<div class="t " style="top:1210.59px;font-size:21.74px;color:#5e6978;left:850.00px;">Pending recommendation</div>
<div class="t " style="top:1198.47px;font-size:20.00px;color:#151b27;letter-spacing:0.900px;left:1200.50px;">******</div>
<div class="t " style="top:1198.47px;font-size:20.00px;color:#151b27;letter-spacing:0.900px;left:1476.50px;">******</div>
<div class="t " style="top:1199.93px;font-size:23.00px;color:#5e6978;left:1537.00px;">(</div>
<svg style="position:absolute;left:1548.00px;top:1204.00px;" width="16" height="16" viewBox="0 0 16 16" fill="none"><path d="M7.5 2.5 V13.5 M3.2 6.8 L7.5 2.5 L11.8 6.8" stroke="#5e6978" stroke-width="1.5" stroke-linecap="round" stroke-linejoin="round"/></svg>
<div class="t " style="top:1199.93px;font-size:23.00px;color:#5e6978;letter-spacing:-1.500px;left:1567.00px;">7%)</div>
<div class="t " style="top:1199.68px;font-size:24.00px;color:#151b27;left:1876.00px;">-</div>
<div class="t " style="top:1199.68px;font-size:24.00px;color:#151b27;left:2276.70px;">-</div>
<div style="position:absolute;left:2564.00px;top:1159.50px;width:160.00px;height:91.00px;border:8px solid #6a50f2;border-radius:14px;box-sizing:border-box;"></div>
<div class="t " style="top:1198.30px;font-size:25.16px;color:#5446b0;left:2578.60px;">Edit details</div>
<div style="position:absolute;left:2762.50px;top:1197.00px;width:7.00px;height:7.00px;border:1.6px solid #8c96a3;border-radius:50%;box-sizing:border-box;"></div>
<div style="position:absolute;left:2762.50px;top:1205.00px;width:7.00px;height:7.00px;border:1.6px solid #8c96a3;border-radius:50%;box-sizing:border-box;"></div>
<div style="position:absolute;left:2762.50px;top:1213.00px;width:7.00px;height:7.00px;border:1.6px solid #8c96a3;border-radius:50%;box-sizing:border-box;"></div>
<div class="t " style="top:1320.60px;font-size:23.50px;color:#151b27;letter-spacing:-0.750px;left:2286.00px;">1 to 1 of 1</div>
<div class="t " style="top:1320.18px;font-size:24.00px;color:#151b27;letter-spacing:-0.450px;left:2549.00px;">Page 1 of 1</div>
<svg style="position:absolute;left:2452.00px;top:1322.00px;" width="20" height="22" viewBox="0 0 20 22" fill="none"><line x1="4" y1="3" x2="4" y2="19" stroke="#c9ced6" stroke-width="1.6" stroke-linecap="round"/><path d="M15 5 L9 11 L15 17" stroke="#c9ced6" stroke-width="1.6" stroke-linecap="round" stroke-linejoin="round"/></svg>
<svg style="position:absolute;left:2506.00px;top:1324.00px;" width="16" height="20" viewBox="0 0 16 20" fill="none"><path d="M11 4 L5 10 L11 16" stroke="#c9ced6" stroke-width="1.6" stroke-linecap="round" stroke-linejoin="round"/></svg>
<svg style="position:absolute;left:2692.00px;top:1324.00px;" width="16" height="20" viewBox="0 0 16 20" fill="none"><path d="M5 4 L11 10 L5 16" stroke="#c9ced6" stroke-width="1.6" stroke-linecap="round" stroke-linejoin="round"/></svg>
<svg style="position:absolute;left:2742.00px;top:1322.00px;" width="20" height="22" viewBox="0 0 20 22" fill="none"><line x1="16" y1="3" x2="16" y2="19" stroke="#c9ced6" stroke-width="1.6" stroke-linecap="round"/><path d="M5 5 L11 11 L5 17" stroke="#c9ced6" stroke-width="1.6" stroke-linecap="round" stroke-linejoin="round"/></svg>
<div style="position:absolute;left:2724.00px;top:1490.00px;width:96.00px;height:96.00px;background:#3c4150;border-radius:16px;"></div>
<svg style="position:absolute;left:2724.00px;top:1490.00px;" width="96" height="96" viewBox="0 0 96 96" fill="none"><path d="M43.5 40.5 L62.5 68.5" stroke="#fff" stroke-width="6" stroke-linecap="round"/><path d="M45.3 41.8 L47.6 45.2" stroke="#3c4150" stroke-width="1.5" stroke-linecap="round"/><path d="M64.00 23.80 Q65.64 30.36 72.20 32.00 Q65.64 33.64 64.00 40.20 Q62.36 33.64 55.80 32.00 Q62.36 30.36 64.00 23.80 Z" fill="#fff"/><path d="M30.00 23.00 Q30.70 29.30 37.00 30.00 Q30.70 30.70 30.00 37.00 Q29.30 30.70 23.00 30.00 Q29.30 29.30 30.00 23.00 Z" fill="#fff"/><path d="M31.00 49.40 Q31.55 53.45 35.60 54.00 Q31.55 54.55 31.00 58.60 Q30.45 54.55 26.40 54.00 Q30.45 53.45 31.00 49.40 Z" fill="#fff"/></svg>
</body></html>
